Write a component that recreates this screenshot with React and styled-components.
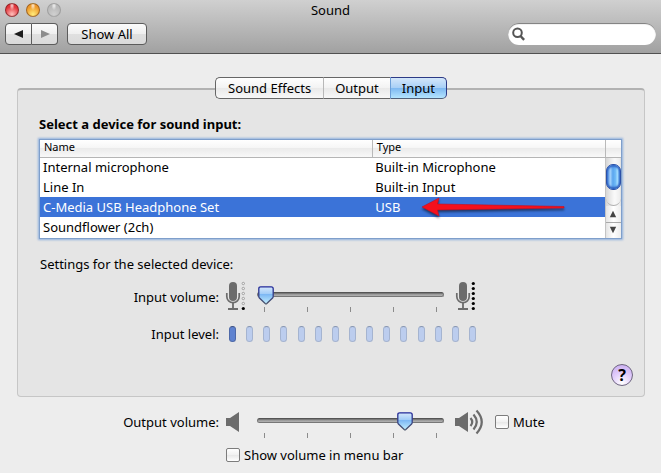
import React, { useState } from 'react';
import styled, { createGlobalStyle, css } from 'styled-components';

const devices = [
    { name: 'Internal microphone', type: 'Built-in Microphone' },
    { name: 'Line In', type: 'Built-in Input' },
    { name: 'C-Media USB Headphone Set', type: 'USB' },
    { name: 'Soundflower (2ch)', type: '' },
];

const tabList = ['Sound Effects', 'Output', 'Input'];
const levelCount = 15;
const tickCount = 5;

const thumbImage = `url("data:image/svg+xml,${encodeURIComponent(`
<svg xmlns="http://www.w3.org/2000/svg" width="16" height="19" viewBox="0 0 16 19">
<defs><linearGradient id="g" x1="0" y1="0" x2="0" y2="1">
<stop offset="0" stop-color="#d6e8fb"/><stop offset="0.4" stop-color="#a3cdf8"/>
<stop offset="0.45" stop-color="#7db8f4"/><stop offset="1" stop-color="#c4f0ff"/>
</linearGradient>
<linearGradient id="s" x1="0" y1="0" x2="0" y2="1">
<stop offset="0" stop-color="#22299a"/><stop offset="1" stop-color="#4c566c"/>
</linearGradient></defs>
<path d="M2.7 .8h10.6q1.9 0 1.9 1.9v7.9q0 .9-.6 1.5L8.8 17.5q-.8.7-1.6 0L1.4 12.1Q.8 11.5.8 10.6V2.7Q.8.8 2.7.8z" fill="url(#g)" stroke="url(#s)" stroke-width="1.3"/>
</svg>`)}")`;

const GlobalStyle = createGlobalStyle`
    * {
        box-sizing: border-box;
    }

    body {
        background: #ededed;
        color: #000;
        font-family: 'Noto Sans', 'Open Sans', sans-serif;
        font-size: 13px;
        line-height: 20px;
        margin: 0;
    }

    button, input {
        color: inherit;
        font: inherit;
        margin: 0;
        padding: 0;
    }
`;

// window chrome
const Header = styled.header`
    background: linear-gradient(#d0d0d0, #a1a1a1);
    border-bottom: 1px solid #515151;
    padding-bottom: 8px;
`;

const TitleBar = styled.div`
    align-items: center;
    display: grid;
    grid-template-columns: 1fr auto 1fr;
    height: 23px;
    padding: 0 5px 3px;
`;

const Title = styled.h1`
    font-size: 13px;
    font-weight: normal;
    margin: 0;
`;

const Lights = styled.div`
    display: flex;
    gap: 7px;
`;

const lightColors = {
    close: ['#ffc0bc', '#e2363c', '#6b1719'],
    minimize: ['#ffec7a', '#ee9a2b', '#7d4513'],
    zoom: ['#d0d0d0', '#b9b9b9', '#909090'],
};

const Light = styled.button`
    background:
        radial-gradient(ellipse at 50% 15%, rgba(255, 255, 255, 0.8), transparent 30%),
        radial-gradient(circle at 50% 85%, ${props => lightColors[props.$kind][0]}, ${props => lightColors[props.$kind][1]} 65%);
    border: 1px solid ${props => lightColors[props.$kind][2]}aa;
    border-radius: 50%;
    height: 14px;
    width: 14px;
`;

const Toolbar = styled.div`
    display: flex;
    gap: 9px;
    padding: 0 5px;
`;

const buttonFace = css`
    background: linear-gradient(#fbfbfb, #efefef 50%, #e0e0e0 51%, #dadada);
    border: 1px solid #5c5c5c;
    height: 22px;
    line-height: 18px;
`;

const ToolButton = styled.button`
    ${buttonFace}
    border-radius: 4px;
    width: 80px;
`;

const NavButtons = styled.div`
    display: flex;
`;

const NavButton = styled.button`
    ${buttonFace}
    align-items: center;
    color: ${props => (props.disabled ? '#8c8c8c' : '#1c1c1c')};
    display: flex;
    justify-content: center;
    width: 27px;

    &:first-child {
        border-radius: 4px 0 0 4px;
    }

    &:last-child {
        border-left: 0;
        border-radius: 0 4px 4px 0;
        width: 26px;
    }
`;

const SearchField = styled.label`
    align-items: center;
    background: #fff;
    border-radius: 11px;
    box-shadow: inset 0 1px 1px #777;
    display: flex;
    gap: 4px;
    height: 22px;
    margin-left: auto;
    padding: 0 8px 0 4px;
    width: 148px;

    svg {
        flex: none;
    }

    input {
        background: none;
        border: 0;
        min-width: 0;
        outline: none;
        width: 100%;
    }
`;

// panes
const Body = styled.main`
    padding: 23px 16px 8px 17px;
`;

const Tabs = styled.div`
    display: flex;
    justify-content: center;
    margin-bottom: -11px;
    position: relative;
`;

const Tab = styled.button`
    background: ${props => (props.$active
        ? 'linear-gradient(#d3e6fa, #a9d0f6 48%, #7fb9f1 52%, #b4e4ff)'
        : 'linear-gradient(#fefefe, #f3f3f3 48%, #e9e9e9 52%, #f8f8f8)')};
    border: 1px solid #666;
    border-left-color: #b8b8b8;
    border-right-width: 0;
    height: 22px;
    line-height: 18px;
    padding: 0 11px;

    &:first-child {
        border-left-color: #666;
        border-radius: 5px 0 0 5px;
        padding: 0 12px;
    }

    &:last-child {
        border-color: #2c3a86;
        border-bottom-color: #4f5f78;
        border-left-color: #6c9fd8;
        border-radius: 0 5px 5px 0;
        border-right-width: 1px;
    }
`;

const Panel = styled.section`
    background: #e5e5e5;
    border: 1px solid #c6c6c6;
    border-radius: 4px;
    border-top: 2px solid #b2b2b2;
    padding: 24px 22px 10px 21px;
`;

const Heading = styled.h2`
    font-size: 13px;
    font-weight: bold;
    line-height: 20px;
    margin: 0 0 5px;
`;

const ListFrame = styled.div`
    background: #fff;
    border: 1px solid #7f9fcb;
    box-shadow: 0 0 2px 1px #8fb1de;
    position: relative;
`;

const DeviceTable = styled.table`
    border-collapse: collapse;
    table-layout: fixed;
    width: 100%;

    th {
        background: linear-gradient(#fff, #f6f6f6 45%, #ebebeb 50%, #f8f8f8);
        border-bottom: 1px solid #b5b5b5;
        border-right: 1px solid #b9b9b9;
        font-size: 11px;
        font-weight: normal;
        height: 17px;
        line-height: 14px;
        padding: 0 4px 2px;
        text-align: left;
    }

    th:last-child {
        border-right: 0;
    }

    td {
        height: 20px;
        line-height: 18px;
        padding: 0 3px;
        white-space: nowrap;
    }
`;

const DeviceRow = styled.tr`
    color: ${props => (props.$selected ? '#fff' : '#000')};

    td {
        background: ${props => (props.$selected ? '#3b73d8' : '#fff')};
    }
`;

const ScrollCell = styled.td`
    && {
        background: linear-gradient(90deg, #d5d5d5, #fafafa 60%, #ececec);
        border-left: 1px solid #c4c4c4;
        color: #000;
        padding: 0;
        vertical-align: top;
    }
`;

const Scrollbar = styled.div`
    display: flex;
    flex-direction: column;
    height: 80px;
`;

const ScrollTrack = styled.div`
    border-bottom: 1px solid #b0b0b0;
    border-radius: 0 0 8px 8px;
    flex: 1;
    padding-top: 6px;
`;

const ScrollThumb = styled.div`
    background: linear-gradient(90deg, #3b7ad8, #a4d2fb 25%, #5aa5ee 45%, #6fbaf6 65%, #a3dcff 80%, #3f7fd6);
    border: 1px solid #2c51a8;
    border-radius: 7px;
    box-shadow: inset 0 2px 2px #3268c8, inset 0 -2px 2px #2f62c0;
    height: 26px;
`;

const ScrollButton = styled.button`
    align-items: center;
    background: linear-gradient(90deg, #e4e4e4, #fff 50%, #ececec);
    border: 0;
    border-top: ${props => (props.$divided ? '1px solid #a9a9a9' : '0')};
    color: #444;
    display: flex;
    height: 16px;
    justify-content: center;
`;

const ArrowPointer = styled.svg`
    filter: drop-shadow(0 2px 1px rgba(0, 0, 0, 0.5));
    height: 20px;
    left: 381px;
    position: absolute;
    top: 57px;
    width: 146px;
`;

const Settings = styled.p`
    margin: 15px 0 7px 1px;
`;

const ControlRow = styled.div`
    align-items: ${props => props.$align || 'start'};
    display: grid;
    grid-template-columns: 180px 38px minmax(100px, 1fr) 178px;
`;

const ControlLabel = styled.label`
    line-height: 20px;
    padding-top: ${props => props.$top || 0}px;
    text-align: right;
`;

const IconCell = styled.div`
    align-items: center;
    display: flex;
    height: 30px;
    padding-left: ${props => props.$indent || 6}px;
`;

const SliderBox = styled.div`
    padding-top: 4px;
`;

const Slider = styled.input`
    appearance: none;
    background: none;
    display: block;
    height: 20px;
    width: 100%;

    &::-webkit-slider-runnable-track {
        background: linear-gradient(#626262, #959595 35%, #b4b4b4);
        border: 1px solid #777;
        border-radius: 3px;
        border-top-color: #555;
        height: 5px;
    }

    &::-webkit-slider-thumb {
        appearance: none;
        background: ${thumbImage} no-repeat;
        height: 19px;
        margin-top: -7px;
        width: 16px;
    }
`;

const Ticks = styled.div`
    display: flex;
    justify-content: space-between;
    padding: 2px 7px 0;
`;

const Tick = styled.span`
    background: #8b8b8b;
    height: 5px;
    width: 1px;
`;

const Levels = styled.div`
    display: flex;
    grid-column: 2 / 4;
    justify-content: space-between;
    margin-right: -32px;
    padding-left: 10px;
`;

const Level = styled.span`
    background: ${props => (props.$on ? '#5f83d0' : '#bccdee')};
    border: 1px solid ${props => (props.$on ? '#4e69a8' : '#a5b4d0')};
    border-radius: 4px;
    border-top-color: ${props => (props.$on ? '#3e5283' : '#8795b0')};
    height: 16px;
    width: 7px;
`;

const LevelRow = styled(ControlRow)`
    margin-top: 12px;
`;

const HelpRow = styled.div`
    display: flex;
    justify-content: flex-end;
    margin: 20px -11px 0 0;
`;

const HelpButton = styled.button`
    background: radial-gradient(circle at 50% 90%, #fff, #e1ccfb 50%, #c5a8ee);
    border: 1px solid #6e6580;
    border-radius: 50%;
    font-size: 16px;
    font-weight: bold;
    height: 22px;
    line-height: 18px;
    width: 22px;
`;

const Footer = styled.footer`
    padding: 10px 23px 0 22px;
`;

const Trailing = styled.div`
    align-items: center;
    display: flex;
    gap: 9px;
    padding-left: 4px;
`;

const CheckLabel = styled.label`
    align-items: center;
    display: flex;
    gap: 4px;
    white-space: nowrap;
`;

const Checkbox = styled.input`
    appearance: none;
    background: linear-gradient(#fff, #f1f1f1 50%, #e8e8e8 51%, #fff);
    border: 1px solid #7c7c7c;
    border-radius: 2px;
    height: 14px;
    width: 14px;

    &:checked {
        background: #6fb0f0;
    }
`;

const MenuBarRow = styled.div`
    padding: 7px 0 0 187px;
`;

const Triangle = ({ points, size = 10 }) => (
    <svg width={size} height={size} viewBox="0 0 10 10" aria-hidden="true">
        <polygon points={points} fill="currentColor" />
    </svg>
);

const Microphone = ({ full }) => (
    <svg width="20" height="30" viewBox="0 0 20 30" aria-hidden="true">
        <rect x="4" y="1" width="8" height="19" rx="4" fill="#6c6c6c" />
        <path d="M1.8 12v3.5a6.2 6.2 0 0 0 12.4 0V12" fill="none" stroke="#6c6c6c" strokeWidth="1.7" />
        <path d="M8 22v5.5M3 28h10" fill="none" stroke="#6c6c6c" strokeWidth="1.8" />
        {[2.5, 7.5, 12.5, 17.5, 22.5, 27.5].map(y => {
            const solid = full || y === 27.5;
            return (
                <circle
                    key={y}
                    cx="18.3"
                    cy={y}
                    r={solid ? 1.6 : 1.2}
                    fill={solid ? '#000' : '#eee'}
                    stroke={solid ? 'none' : '#888'}
                    strokeWidth="0.7"
                />
            );
        })}
    </svg>
);

const Speaker = ({ loud }) => (
    <svg width={loud ? 32 : 16} height="26" viewBox={`0 0 ${loud ? 32 : 16} 26`} aria-hidden="true">
        <path d="M1 9h4l9-6v20l-9-6H1z" fill="#6c6c6c" />
        {loud && (
            <g fill="none" stroke="#6c6c6c" strokeWidth="2.2">
                <path d="M16.500 9q3.500 4 0 8" />
                <path d="M19.500 5.500q6.500 7.500 0 15" />
                <path d="M22.500 1.500q10.500 11.500 0 23" />
            </g>
        )}
    </svg>
);

const VolumeSlider = ({ id, initial }) => {
    const [value, setValue] = useState(initial);

    return (
        <SliderBox>
            <Slider
                id={id}
                type="range"
                min="0"
                max="100"
                value={value}
                onChange={e => setValue(Number(e.target.value))}
            />
            <Ticks>
                {Array.from({ length: tickCount }, (_, i) => <Tick key={`tick-${i}`} />)}
            </Ticks>
        </SliderBox>
    );
};

const DeviceList = () => {
    const [selected, setSelected] = useState(2);

    return (
        <ListFrame>
            <DeviceTable>
                <colgroup>
                    <col width="57.2%" />
                    <col />
                    <col width="16" />
                </colgroup>
                <thead>
                    <tr>
                        <th>Name</th>
                        <th>Type</th>
                        <th aria-label="Scroll" />
                    </tr>
                </thead>
                <tbody>
                    {devices.map((device, index) => (
                        <DeviceRow
                            key={device.name}
                            $selected={index === selected}
                            onClick={() => setSelected(index)}
                        >
                            <td>{device.name}</td>
                            <td>{device.type}</td>
                            {index === 0 && (
                                <ScrollCell rowSpan={devices.length}>
                                    <Scrollbar>
                                        <ScrollTrack>
                                            <ScrollThumb />
                                        </ScrollTrack>
                                        <ScrollButton aria-label="Scroll up">
                                            <Triangle points="5,1 9,9 1,9" size={8} />
                                        </ScrollButton>
                                        <ScrollButton $divided aria-label="Scroll down">
                                            <Triangle points="1,1 9,1 5,9" size={8} />
                                        </ScrollButton>
                                    </Scrollbar>
                                </ScrollCell>
                            )}
                        </DeviceRow>
                    ))}
                </tbody>
            </DeviceTable>
            <ArrowPointer viewBox="0 0 146 20" aria-hidden="true">
                <path d="M1 10L18 1L16.5 7L143 9.5V11L16.5 13L18 19Z" fill="#f5101c" stroke="#c40f20" strokeWidth="0.6" />
            </ArrowPointer>
        </ListFrame>
    );
};

const App = () => {
    const [activeTab, setActiveTab] = useState('Input');

    return (
        <>
            <GlobalStyle />
            <Header>
                <TitleBar>
                    <Lights>
                        <Light $kind="close" aria-label="Close" />
                        <Light $kind="minimize" aria-label="Minimize" />
                        <Light $kind="zoom" aria-label="Zoom" />
                    </Lights>
                    <Title>Sound</Title>
                </TitleBar>
                <Toolbar>
                    <NavButtons>
                        <NavButton aria-label="Back">
                            <Triangle points="9,1 9,9 0,5" />
                        </NavButton>
                        <NavButton disabled aria-label="Forward">
                            <Triangle points="1,1 1,9 10,5" />
                        </NavButton>
                    </NavButtons>
                    <ToolButton>Show All</ToolButton>
                    <SearchField>
                        <svg width="13" height="14" viewBox="0 0 13 14" aria-hidden="true">
                            <circle cx="5.5" cy="5.8" r="4.3" fill="none" stroke="#555" strokeWidth="2" />
                            <path d="M8.5 9l3.6 3.9" stroke="#555" strokeWidth="2.4" />
                        </svg>
                        <input type="text" aria-label="Search" />
                    </SearchField>
                </Toolbar>
            </Header>
            <Body>
                <Tabs role="tablist">
                    {tabList.map(tab => (
                        <Tab
                            key={tab}
                            role="tab"
                            aria-selected={tab === activeTab}
                            $active={tab === activeTab}
                            onClick={() => setActiveTab(tab)}
                        >
                            {tab}
                        </Tab>
                    ))}
                </Tabs>
                <Panel>
                    <Heading>Select a device for sound input:</Heading>
                    <DeviceList />
                    <Settings>Settings for the selected device:</Settings>
                    <ControlRow>
                        <ControlLabel htmlFor="input-volume" $top={6}>Input volume:</ControlLabel>
                        <IconCell><Microphone /></IconCell>
                        <VolumeSlider id="input-volume" initial={0} />
                        <IconCell $indent={11}><Microphone full /></IconCell>
                    </ControlRow>
                    <LevelRow $align="center">
                        <ControlLabel as="span">Input level:</ControlLabel>
                        <Levels role="img" aria-label="Input level">
                            {Array.from({ length: levelCount }, (_, i) => (
                                <Level key={`level-${i}`} $on={i === 0} />
                            ))}
                        </Levels>
                    </LevelRow>
                    <HelpRow>
                        <HelpButton aria-label="Help">?</HelpButton>
                    </HelpRow>
                </Panel>
                <Footer>
                    <ControlRow>
                        <ControlLabel htmlFor="output-volume" $top={5}>Output volume:</ControlLabel>
                        <IconCell><Speaker /></IconCell>
                        <VolumeSlider id="output-volume" initial={82} />
                        <Trailing>
                            <IconCell as="span"><Speaker loud /></IconCell>
                            <CheckLabel>
                                <Checkbox type="checkbox" />
                                Mute
                            </CheckLabel>
                        </Trailing>
                    </ControlRow>
                    <MenuBarRow>
                        <CheckLabel>
                            <Checkbox type="checkbox" />
                            Show volume in menu bar
                        </CheckLabel>
                    </MenuBarRow>
                </Footer>
            </Body>
        </>
    );
};

export default App;
